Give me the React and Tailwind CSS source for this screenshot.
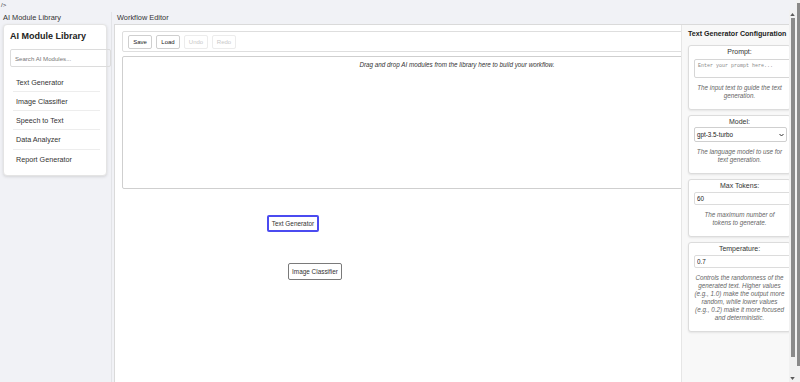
import React from 'react';

const modules = ['Text Generator', 'Image Classifier', 'Speech to Text', 'Data Analyzer', 'Report Generator'];

const ConfigCard = ({ label, children, desc, labelGap = 'mt-[2px]' }) => (
    <div className="w-[103px] bg-white border border-[#dcdcdc] rounded-[3px] shadow-[0_1px_2px_rgba(0,0,0,0.08)] px-[5px] pt-[2px] pb-[9px]">
        <div className="text-[7px] leading-[8px] text-[#333] text-center">{label}</div>
        <div className={labelGap}>{children}</div>
        <p className="mt-[6px] text-[6.3px] leading-[8px] italic text-[#666] text-center whitespace-nowrap">{desc}</p>
    </div>
);

const ToolButton = ({ children, disabled }) => (
    <button
        disabled={disabled}
        className={`w-[24px] h-[14px] rounded-[2px] border text-[6px] leading-[12px] bg-white ${disabled ? 'border-[#ececec] text-[#c8c8c8]' : 'border-[#cfcfcf] text-[#222]'}`}
    >
        {children}
    </button>
);

const Arrow = ({ up }) => (
    <svg width="5" height="3" viewBox="0 0 6 4" className="block">
        <path d={up ? 'M0 4L3 0L6 4Z' : 'M0 0L6 0L3 4Z'} fill="#5a5a5a" />
    </svg>
);

export default function App() {
    return (
        <div className="relative h-[382px] overflow-hidden flex bg-[#f1f2f6] font-['Liberation_Sans',Arial,sans-serif]">
            <div className="flex-1 min-w-0 flex flex-col">
                <div className="h-[12px] text-[6px] leading-[10px] text-[#333] pl-[1px]">/&gt;</div>

                <div className="flex flex-1 min-h-0">
                    {/* Library column */}
                    <aside className="w-[112px] shrink-0 pl-[3px] border-r border-[#e3e4e8]">
                        <div className="h-[12px] text-[7.4px] leading-[12px] text-[#333]">AI Module Library</div>
                        <div className="w-[104px] bg-white rounded-[4px] border border-[#e4e4e4] shadow-[0_1px_3px_rgba(0,0,0,0.12)] pl-[6px] pr-[6px] pt-[5px] pb-[6px]">
                            <h2 className="text-[9px] leading-[12px] font-bold text-[#222]">AI Module Library</h2>
                            <input
                                placeholder="Search AI Modules..."
                                className="mt-[7px] w-[101px] h-[18px] border border-[#dcdcdc] rounded-[2px] px-[4px] text-[6.1px] text-[#333] placeholder:text-[#777] outline-none"
                            />
                            <ul className="mt-[5px] ml-[3px] w-[87px]">
                                {modules.map((m, i) => (
                                    <li
                                        key={m}
                                        className={`h-[19.3px] pl-[3px] text-[7.2px] leading-[19px] text-[#333] ${i < modules.length - 1 ? 'border-b border-[#ededed]' : ''}`}
                                    >
                                        {m}
                                    </li>
                                ))}
                            </ul>
                        </div>
                    </aside>

                    {/* Workflow editor */}
                    <main className="flex-1 min-w-0 flex flex-col">
                        <div className="h-[12px] pl-[5px] text-[7.4px] leading-[12px] text-[#333]">Workflow Editor</div>
                        <div className="relative flex-1 ml-[2px] bg-white border-l border-t border-[#dadada] overflow-hidden">
                            <div className="w-[677px] pl-[7px] pt-[6px]">
                                <div className="h-[21px] border border-[#dedede] rounded-[2px] flex items-center gap-[4px] pl-[5px]">
                                    <ToolButton>Save</ToolButton>
                                    <ToolButton>Load</ToolButton>
                                    <ToolButton disabled>Undo</ToolButton>
                                    <ToolButton disabled>Redo</ToolButton>
                                </div>
                                <div className="mt-[4px] h-[133px] border border-[#cfcfcf] rounded-[2px] pt-[4px] text-center text-[6.3px] leading-[8px] italic text-[#333]">
                                    Drag and drop AI modules from the library here to build your workflow.
                                </div>
                            </div>

                            {/* Nodes on canvas */}
                            <div className="absolute left-[152px] top-[190px] w-[52px] h-[17px] border-2 border-[#4b4bf0] rounded-[2px] bg-white flex items-center justify-center text-[6.4px] text-[#333]">
                                Text Generator
                            </div>
                            <div className="absolute left-[173px] top-[238px] w-[54px] h-[17px] border-[1.5px] border-[#7a7a7a] rounded-[2px] bg-white flex items-center justify-center text-[6.4px] text-[#333]">
                                Image Classifier
                            </div>

                            {/* Config panel */}
                            <div className="absolute top-0 right-0 bottom-0 w-[115px] bg-[#f8f8f8] border-l border-[#e6e6e6] overflow-hidden pl-[6px] pt-[5px]">
                                <h3 className="text-[7.1px] leading-[8px] font-bold text-[#222] whitespace-nowrap">Text Generator Configuration</h3>
                                <div className="mt-[7px] flex flex-col gap-[5px]">
                                    <ConfigCard
                                        label="Prompt:"
                                        labelGap="mt-[3px]"
                                        desc={<>The input text to guide the text<br />generation.</>}
                                    >
                                        <textarea
                                            placeholder="Enter your prompt here..."
                                            className="block w-[100px] h-[19px] resize-none border border-[#d6d6d6] rounded-[2px] px-[3px] pt-[3px] font-['Liberation_Mono',monospace] text-[5px] leading-[6px] placeholder:text-[#888] outline-none"
                                        />
                                    </ConfigCard>
                                    <ConfigCard
                                        label="Model:"
                                        labelGap="mt-[1px]"
                                        desc={<>The language model to use for<br />text generation.</>}
                                    >
                                        <div className="w-[93px] h-[15px] border border-[#cfcfcf] rounded-[2px] flex items-center justify-between pl-[2px] pr-[2px] text-[6.3px] text-[#222]">
                                            <span>gpt-3.5-turbo</span>
                                            <svg width="5" height="4" viewBox="0 0 10 6" fill="none" stroke="#333" strokeWidth="2">
                                                <path d="M1 1l4 4 4-4" />
                                            </svg>
                                        </div>
                                    </ConfigCard>
                                    <ConfigCard
                                        label="Max Tokens:"
                                        desc={<>The maximum number of<br />tokens to generate.</>}
                                    >
                                        <input
                                            defaultValue="60"
                                            className="block w-[100px] h-[13px] border border-[#dcdcdc] rounded-[2px] px-[2px] text-[6.3px] text-[#222] outline-none"
                                        />
                                    </ConfigCard>
                                    <ConfigCard
                                        label="Temperature:"
                                        desc={<>Controls the randomness of the<br />generated text. Higher values<br />(e.g., 1.0) make the output more<br />random, while lower values<br />(e.g., 0.2) make it more focused<br />and deterministic.</>}
                                    >
                                        <input
                                            defaultValue="0.7"
                                            className="block w-[100px] h-[13px] border border-[#dcdcdc] rounded-[2px] px-[2px] text-[6.3px] text-[#222] outline-none"
                                        />
                                    </ConfigCard>
                                </div>
                            </div>
                        </div>
                    </main>
                </div>
            </div>

            {/* Page scrollbar gutter */}
            <div className="w-[4px] shrink-0 bg-[#f1f1f1] pt-[3px]">
                <div className="h-[363px] w-[3px] ml-[1px] bg-[#8a8a8a]" />
            </div>

            {/* Panel scrollbar */}
            <div className="absolute right-[4px] top-[10px] bottom-0 w-[7px] bg-[#f1f1f1] flex flex-col items-center">
                <div className="mt-[3px]"><Arrow up /></div>
                <div className="mt-[2px] w-[4px] h-[339px] bg-[#8a8a8a]" />
                <div className="mt-auto mb-[2px]"><Arrow /></div>
            </div>
        </div>
    );
}
